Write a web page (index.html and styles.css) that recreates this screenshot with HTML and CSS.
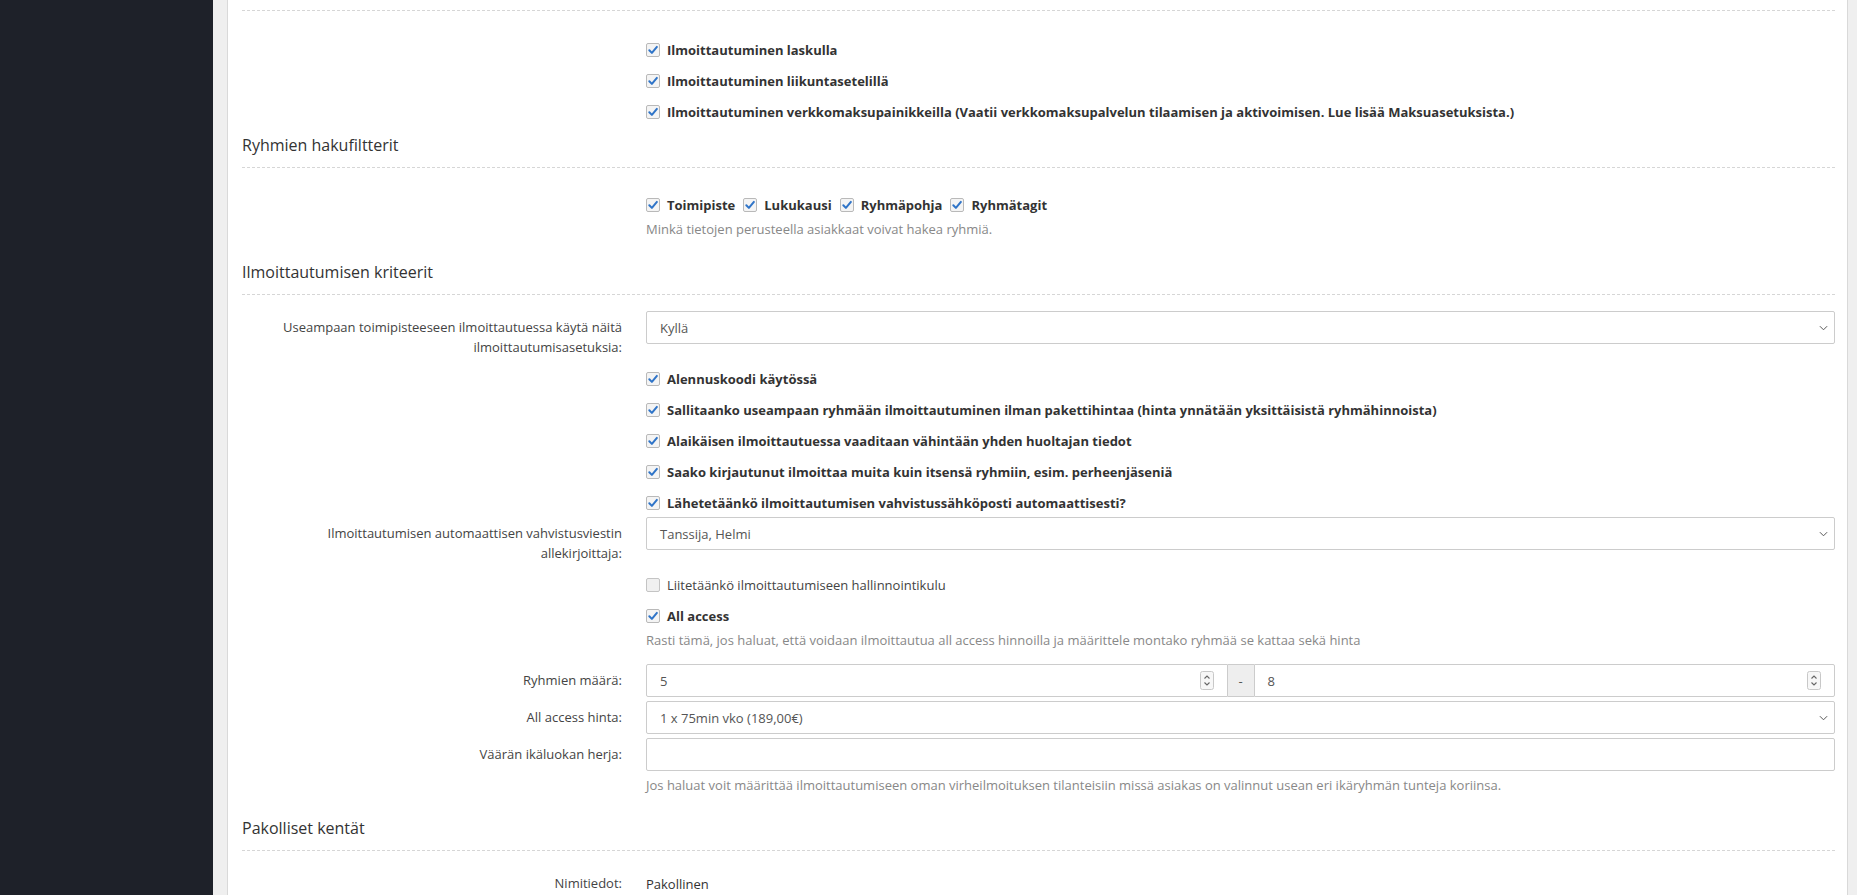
FILE: index.html
```html
<!DOCTYPE html>
<html lang="fi">
<head>
<meta charset="utf-8">
<title>Ilmoittautumisasetukset</title>
<link rel="stylesheet" href="styles.css">
</head>
<body>
<div class="layout">
  <aside class="sidebar"></aside>
  <div class="gutter"></div>
  <main class="panel">
    <h3 class="section-title first">Ilmoittautumisen tyypit</h3>
    <div class="section-body">
      <div class="row"><div class="label"></div><div class="field">
        <label class="check lead top"><svg class="cb" viewBox="0 0 14 14"><rect x="0.5" y="0.5" width="13" height="13" rx="1.5" class="cb-bg"/><path d="M3.3 7.2 L5.9 9.9 L10.9 3.9" class="cb-tick"/></svg>Ilmoittautuminen laskulla</label>
      </div></div>
      <div class="row"><div class="label"></div><div class="field">
        <label class="check"><svg class="cb" viewBox="0 0 14 14"><rect x="0.5" y="0.5" width="13" height="13" rx="1.5" class="cb-bg"/><path d="M3.3 7.2 L5.9 9.9 L10.9 3.9" class="cb-tick"/></svg>Ilmoittautuminen liikuntasetelillä</label>
      </div></div>
      <div class="row"><div class="label"></div><div class="field">
        <label class="check"><svg class="cb" viewBox="0 0 14 14"><rect x="0.5" y="0.5" width="13" height="13" rx="1.5" class="cb-bg"/><path d="M3.3 7.2 L5.9 9.9 L10.9 3.9" class="cb-tick"/></svg>Ilmoittautuminen verkkomaksupainikkeilla (Vaatii verkkomaksupalvelun tilaamisen ja aktivoimisen. Lue lisää Maksuasetuksista.)</label>
      </div></div>
    </div>

    <h3 class="section-title">Ryhmien hakufiltterit</h3>
    <div class="section-body">
      <div class="row"><div class="label"></div><div class="field">
        <div class="check-line lead">
          <label class="check"><svg class="cb" viewBox="0 0 14 14"><rect x="0.5" y="0.5" width="13" height="13" rx="1.5" class="cb-bg"/><path d="M3.3 7.2 L5.9 9.9 L10.9 3.9" class="cb-tick"/></svg>Toimipiste</label>
          <label class="check"><svg class="cb" viewBox="0 0 14 14"><rect x="0.5" y="0.5" width="13" height="13" rx="1.5" class="cb-bg"/><path d="M3.3 7.2 L5.9 9.9 L10.9 3.9" class="cb-tick"/></svg>Lukukausi</label>
          <label class="check"><svg class="cb" viewBox="0 0 14 14"><rect x="0.5" y="0.5" width="13" height="13" rx="1.5" class="cb-bg"/><path d="M3.3 7.2 L5.9 9.9 L10.9 3.9" class="cb-tick"/></svg>Ryhmäpohja</label>
          <label class="check"><svg class="cb" viewBox="0 0 14 14"><rect x="0.5" y="0.5" width="13" height="13" rx="1.5" class="cb-bg"/><path d="M3.3 7.2 L5.9 9.9 L10.9 3.9" class="cb-tick"/></svg>Ryhmätagit</label>
        </div>
        <p class="help">Minkä tietojen perusteella asiakkaat voivat hakea ryhmiä.</p>
      </div></div>
    </div>

    <h3 class="section-title">Ilmoittautumisen kriteerit</h3>
    <div class="section-body">
      <div class="row"><div class="label">Useampaan toimipisteeseen ilmoittautuessa käytä näitä ilmoittautumisasetuksia:</div><div class="field">
        <div class="select"><span>Kyllä</span><svg class="chev" viewBox="0 0 10 6"><path d="M1 1 L5 5 L9 1"/></svg></div>
      </div></div>
      <div class="row"><div class="label"></div><div class="field">
        <label class="check"><svg class="cb" viewBox="0 0 14 14"><rect x="0.5" y="0.5" width="13" height="13" rx="1.5" class="cb-bg"/><path d="M3.3 7.2 L5.9 9.9 L10.9 3.9" class="cb-tick"/></svg>Alennuskoodi käytössä</label>
      </div></div>
      <div class="row"><div class="label"></div><div class="field">
        <label class="check"><svg class="cb" viewBox="0 0 14 14"><rect x="0.5" y="0.5" width="13" height="13" rx="1.5" class="cb-bg"/><path d="M3.3 7.2 L5.9 9.9 L10.9 3.9" class="cb-tick"/></svg>Sallitaanko useampaan ryhmään ilmoittautuminen ilman pakettihintaa (hinta ynnätään yksittäisistä ryhmähinnoista)</label>
      </div></div>
      <div class="row"><div class="label"></div><div class="field">
        <label class="check"><svg class="cb" viewBox="0 0 14 14"><rect x="0.5" y="0.5" width="13" height="13" rx="1.5" class="cb-bg"/><path d="M3.3 7.2 L5.9 9.9 L10.9 3.9" class="cb-tick"/></svg>Alaikäisen ilmoittautuessa vaaditaan vähintään yhden huoltajan tiedot</label>
      </div></div>
      <div class="row"><div class="label"></div><div class="field">
        <label class="check"><svg class="cb" viewBox="0 0 14 14"><rect x="0.5" y="0.5" width="13" height="13" rx="1.5" class="cb-bg"/><path d="M3.3 7.2 L5.9 9.9 L10.9 3.9" class="cb-tick"/></svg>Saako kirjautunut ilmoittaa muita kuin itsensä ryhmiin, esim. perheenjäseniä</label>
      </div></div>
      <div class="row"><div class="label"></div><div class="field">
        <label class="check"><svg class="cb" viewBox="0 0 14 14"><rect x="0.5" y="0.5" width="13" height="13" rx="1.5" class="cb-bg"/><path d="M3.3 7.2 L5.9 9.9 L10.9 3.9" class="cb-tick"/></svg>Lähetetäänkö ilmoittautumisen vahvistussähköposti automaattisesti?</label>
      </div></div>
      <div class="row"><div class="label">Ilmoittautumisen automaattisen vahvistusviestin allekirjoittaja:</div><div class="field">
        <div class="select"><span>Tanssija, Helmi</span><svg class="chev" viewBox="0 0 10 6"><path d="M1 1 L5 5 L9 1"/></svg></div>
      </div></div>
      <div class="row"><div class="label"></div><div class="field">
        <label class="check plain"><svg class="cb" viewBox="0 0 14 14"><rect x="0.5" y="0.5" width="13" height="13" rx="1.5" class="cb-off"/></svg>Liitetäänkö ilmoittautumiseen hallinnointikulu</label>
      </div></div>
      <div class="row"><div class="label"></div><div class="field">
        <label class="check"><svg class="cb" viewBox="0 0 14 14"><rect x="0.5" y="0.5" width="13" height="13" rx="1.5" class="cb-bg"/><path d="M3.3 7.2 L5.9 9.9 L10.9 3.9" class="cb-tick"/></svg>All access</label>
        <p class="help">Rasti tämä, jos haluat, että voidaan ilmoittautua all access hinnoilla ja määrittele montako ryhmää se kattaa sekä hinta</p>
      </div></div>
      <div class="row"><div class="label">Ryhmien määrä:</div><div class="field">
        <div class="range">
          <div class="input num"><span>5</span><svg class="spin" viewBox="0 0 14 19"><rect x="0.5" y="0.5" width="13" height="18" rx="2" class="spin-bg"/><path d="M4.5 7.5 L7 5 L9.5 7.5 M4.5 11.5 L7 14 L9.5 11.5" class="spin-ar"/></svg></div>
          <div class="addon">-</div>
          <div class="input num"><span>8</span><svg class="spin" viewBox="0 0 14 19"><rect x="0.5" y="0.5" width="13" height="18" rx="2" class="spin-bg"/><path d="M4.5 7.5 L7 5 L9.5 7.5 M4.5 11.5 L7 14 L9.5 11.5" class="spin-ar"/></svg></div>
        </div>
      </div></div>
      <div class="row"><div class="label">All access hinta:</div><div class="field">
        <div class="select"><span>1 x 75min vko (189,00€)</span><svg class="chev" viewBox="0 0 10 6"><path d="M1 1 L5 5 L9 1"/></svg></div>
      </div></div>
      <div class="row"><div class="label">Väärän ikäluokan herja:</div><div class="field">
        <div class="input"></div>
        <p class="help">Jos haluat voit määrittää ilmoittautumiseen oman virheilmoituksen tilanteisiin missä asiakas on valinnut usean eri ikäryhmän tunteja koriinsa.</p>
      </div></div>
    </div>

    <h3 class="section-title">Pakolliset kentät</h3>
    <div class="section-body">
      <div class="row"><div class="label">Nimitiedot:</div><div class="field">
        <div class="static">Pakollinen</div>
      </div></div>
    </div>
  </main>
  <div class="edge"></div>
</div>
</body>
</html>
```

FILE: styles.css
```css
* { box-sizing: border-box; }

html, body {
  margin: 0;
  height: 100%;
  overflow: hidden;
}

body {
  font-family: "Open Sans", "DejaVu Sans", sans-serif;
  font-size: 13px;
  color: #444;
  background: #fff;
}

.layout {
  display: flex;
  height: 895px;
}

.sidebar {
  width: 213px;
  flex: none;
  background: #1e2129;
}

.gutter {
  width: 15px;
  flex: none;
  background: #efefef;
  border-right: 1px solid #d9d9d9;
}

.panel {
  flex: 1;
  min-width: 0;
  background: #fff;
  padding: 0 12px 0 14px;
}

.edge {
  width: 10px;
  flex: none;
  background: #efefef;
  border-left: 1px solid #d9d9d9;
}

.section-title {
  margin: 0;
  font-size: 16px;
  font-weight: 400;
  line-height: 24px;
  color: #333;
  padding-bottom: 10px;
  border-bottom: 1px dashed #d6d6d6;
}

.section-title.first {
  margin-top: -24px;
}

.section-body {
  display: flex;
  flex-direction: column;
  gap: 4px;
  padding: 16px 0 11px;
}

.row {
  display: grid;
  grid-template-columns: 404px 1fr;
}

.label {
  text-align: right;
  padding: 6px 24px 1px 30px;
  line-height: 20px;
  color: #444;
}

.field {
  min-width: 0;
}

.check {
  display: flex;
  align-items: center;
  padding-top: 7px;
  line-height: 20px;
  font-weight: 700;
  color: #333;
  white-space: nowrap;
}

.check.plain {
  font-weight: 400;
  color: #444;
}

.lead {
  margin-top: 4px;
}

.lead.top {
  margin-top: 6px;
}

.check-line {
  display: flex;
  gap: 8px;
}

.cb {
  width: 14px;
  height: 14px;
  flex: none;
  margin-right: 7px;
}

.cb-bg {
  fill: #f4f4f4;
  stroke: #b9b9b9;
  stroke-width: 1;
}

.cb-off {
  fill: #f0f0f0;
  stroke: #c4c4c4;
  stroke-width: 1;
}

.cb-tick {
  fill: none;
  stroke: #2f74c8;
  stroke-width: 2;
  stroke-linecap: round;
  stroke-linejoin: round;
}

.help {
  margin: 4px 0 10px;
  line-height: 20px;
  color: #888;
}

.select,
.input {
  height: 33px;
  border: 1px solid #ccc;
  border-radius: 2px;
  background: #fff;
  color: #555;
  display: flex;
  align-items: center;
  padding: 0 6px 0 13px;
}

.select span,
.input span {
  flex: 1;
}

.chev {
  width: 9px;
  height: 6px;
  flex: none;
}

.chev path {
  fill: none;
  stroke: #555;
  stroke-width: 1.1;
}

.range {
  display: flex;
}

.range .input {
  flex: 1;
  padding-right: 13px;
}

.range .input:first-child {
  border-radius: 2px 0 0 2px;
}

.range .input:last-child {
  border-radius: 0 2px 2px 0;
}

.addon {
  width: 26px;
  flex: none;
  height: 33px;
  background: #eee;
  border-top: 1px solid #ccc;
  border-bottom: 1px solid #ccc;
  display: flex;
  align-items: center;
  justify-content: center;
  color: #555;
}

.spin {
  width: 14px;
  height: 19px;
  flex: none;
}

.spin-bg {
  fill: #f7f7f7;
  stroke: #c8c8c8;
}

.spin-ar {
  fill: none;
  stroke: #666;
  stroke-width: 1.1;
}

.static {
  padding-top: 7px;
  line-height: 20px;
  color: #333;
}
```
